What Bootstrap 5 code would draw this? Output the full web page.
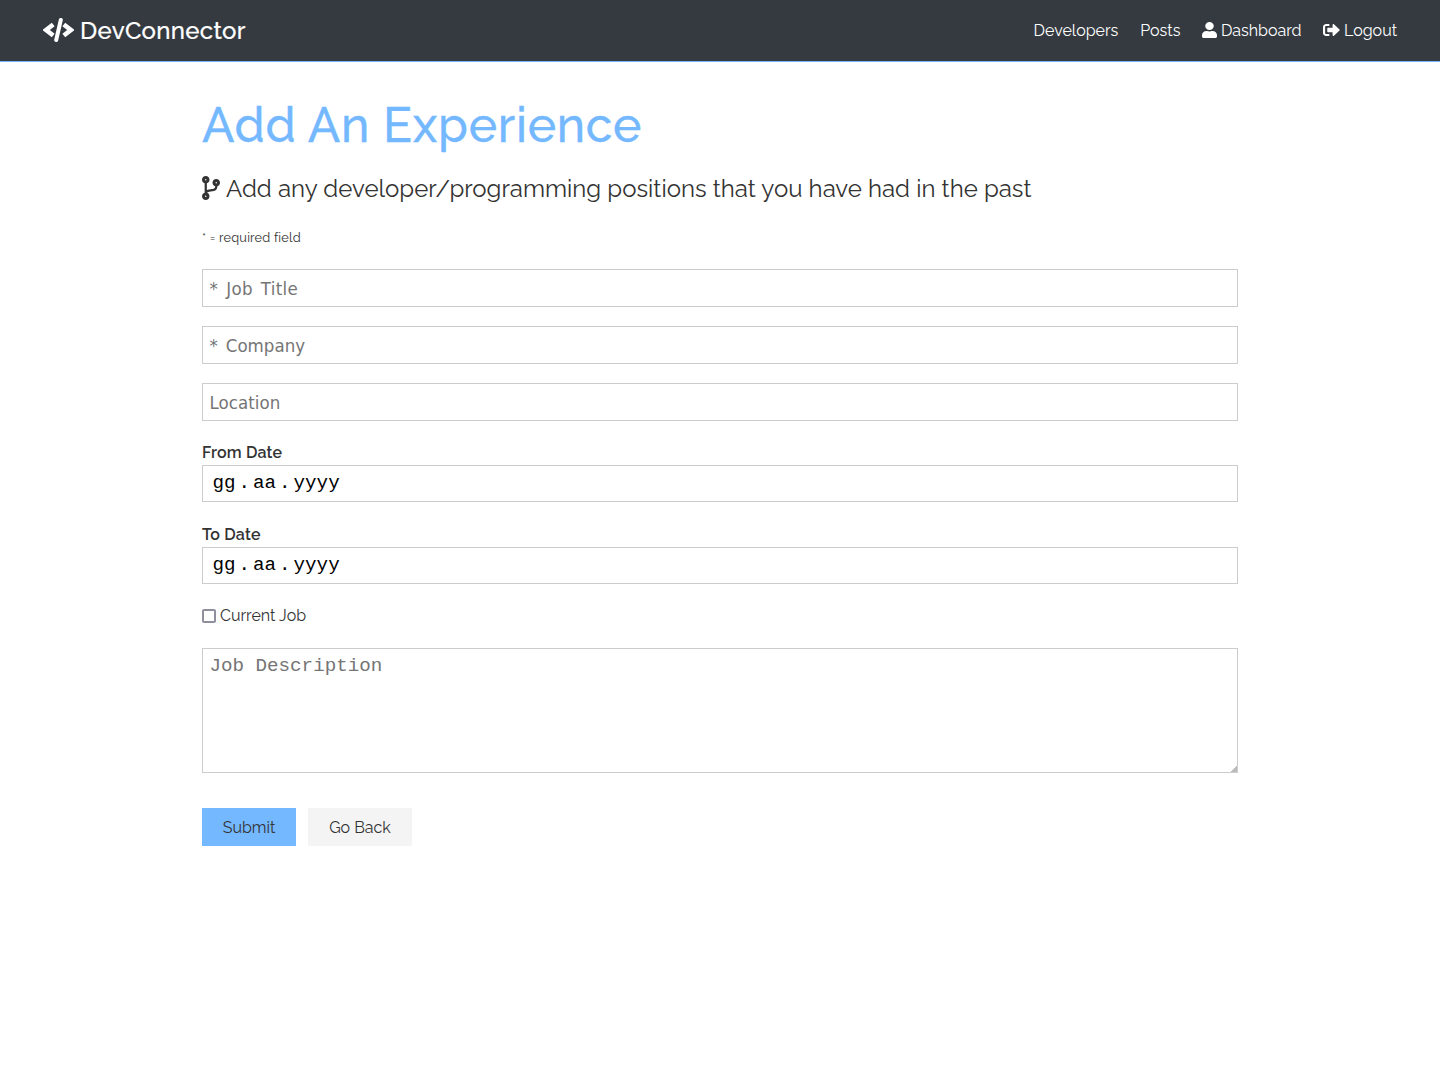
<!DOCTYPE html>
<html lang="en">
<head>
<meta charset="utf-8">
<meta name="viewport" content="width=device-width, initial-scale=1">
<title>DevConnector</title>
<link href="https://cdn.jsdelivr.net/npm/bootstrap@5.3.0/dist/css/bootstrap.min.css" rel="stylesheet">
<style>
body{font-family:Raleway,Lato,sans-serif;font-size:16px;line-height:1.6;color:#333;background:#fff}
.topbar{height:62px;background:#343a40;border-bottom:1px solid #74b8ff;padding:0 43px}
.topbar a{color:#fff;text-decoration:none;white-space:nowrap}
.brand{font-size:24px;font-weight:500;letter-spacing:.32px;gap:6px}
.brand svg{width:31px;height:24px}
.brand span{padding-top:1px;-webkit-text-stroke:.2px #fff}
.menu{gap:22px}
.menu a{gap:4px}
.menu .m3{gap:3.500px}
.menu .m4{margin-left:-.5px}
.menu svg{margin-bottom:2px}
.page{width:1100px;padding:32px 32px 0}
.title{font-size:48px;line-height:58px;font-weight:500;letter-spacing:.73px;color:#74b8ff;-webkit-text-stroke:.3px #74b8ff;margin:2px 0 16px;white-space:nowrap}
.intro{font-size:24px;line-height:38px;letter-spacing:.02px;gap:6px;margin-bottom:20px;white-space:nowrap}
.intro svg{margin-bottom:2px}
.hint{font-size:12.8px;line-height:20px;letter-spacing:.2px;margin-bottom:21px}
.page .form-control{border:1px solid #ccc;border-radius:0;font-size:19.2px;padding:6px 6.500px;color:#000;background:#fff;box-shadow:none}
.page input.form-control{font-family:Tahoma,"DejaVu Sans Condensed","DejaVu Sans",sans-serif;font-stretch:condensed;font-size:18.500px;word-spacing:2.500px;letter-spacing:.05px;height:38px;margin-bottom:19px}
.page input.job-title{letter-spacing:.3px}
.page .form-control::placeholder{color:#757575;opacity:1}
.page textarea.form-control{font-family:"Courier New","Liberation Mono",monospace;height:125px;line-height:22px;margin-bottom:35px}
textarea::-webkit-resizer{background:linear-gradient(135deg,transparent 78%,#bbb 78%)}
.page .datebox{font-family:"Courier New","Liberation Mono",monospace;height:37px;line-height:23px;margin-bottom:20px}
.datebox span{padding:0 3px}
.flabel{font-weight:600;line-height:25px;letter-spacing:.18px}
.check{gap:4px;line-height:26px;margin-bottom:19px;margin-top:-1px}
.check input{appearance:none;width:14px;height:14px;border:2px solid #8f8f9d;border-radius:2px;margin:0;background:#fff}
.page .btn{border:0;border-radius:0;padding:1px 0 0;height:38px;line-height:38px;color:#333;font-size:16px}
.actions{gap:12px}
.btn-send,.btn-send:hover{width:94px;background:#74b8ff}
.btn-back,.btn-back:hover{width:104px;background:#f4f4f4}
svg{flex:none;fill:currentColor}
</style>
</head>
<body>
<nav class="topbar d-flex align-items-center justify-content-between">
  <a class="brand d-flex align-items-center" href="#"><svg viewBox="0 0 31 24"><path d="M10.200 6.500 3.200 12l7 5.500M20.800 6.500l7 5.500-7 5.500" fill="none" stroke="currentColor" stroke-width="4.600"/><path d="M17.800 2 13.200 22" stroke="currentColor" stroke-width="4" stroke-linecap="round"/></svg><span>DevConnector</span></a>
  <div class="menu d-flex align-items-center">
    <a href="#">Developers</a>
    <a href="#">Posts</a>
    <a class="m3 d-flex align-items-center" href="#"><svg width="15" height="16" viewBox="0 0 448 512" preserveAspectRatio="none"><path d="M224 256c70.7 0 128-57.3 128-128S294.700 0 224 0 96 57.300 96 128s57.300 128 128 128zm89.600 32h-16.700c-22.200 10.200-46.900 16-72.900 16s-50.600-5.800-72.900-16h-16.700C60.200 288 0 348.200 0 422.400V464c0 26.500 21.500 48 48 48h352c26.500 0 48-21.500 48-48v-41.600c0-74.200-60.200-134.400-134.400-134.400z"/></svg><span>Dashboard</span></a>
    <a class="m4 d-flex align-items-center" href="#"><svg width="17" height="16" viewBox="0 0 512 512" preserveAspectRatio="none"><path d="M497 273L329 441c-15 15-41 4.500-41-17v-96H152c-13.300 0-24-10.700-24-24v-96c0-13.300 10.700-24 24-24h136V88c0-21.400 25.900-32 41-17l168 168c9.300 9.400 9.300 24.600 0 34zM192 436v-40c0-6.600-5.400-12-12-12H96c-17.700 0-32-14.300-32-32V160c0-17.700 14.300-32 32-32h84c6.600 0 12-5.400 12-12V76c0-6.600-5.400-12-12-12H96c-53 0-96 43-96 96v192c0 53 43 96 96 96h84c6.600 0 12-5.400 12-12z"/></svg><span>Logout</span></a>
  </div>
</nav>
<main class="page mx-auto">
  <h1 class="title">Add An Experience</h1>
  <p class="intro d-flex align-items-center"><svg width="18" height="24" viewBox="0 0 384 512"><path d="M384 144c0-44.200-35.800-80-80-80s-80 35.800-80 80c0 36.400 24.300 67.100 57.500 76.800-.6 16.100-4.200 28.500-11 36.900-15.400 19.200-49.300 22.400-85.200 25.700-28.200 2.600-57.400 5.400-81.300 16.900v-144c32.500-10.200 56-40.500 56-76.300 0-44.200-35.800-80-80-80S0 35.800 0 80c0 35.800 23.500 66.100 56 76.300v199.300C23.500 365.900 0 396.200 0 432c0 44.200 35.800 80 80 80s80-35.800 80-80c0-34-21.200-63.100-51.200-74.600 3.100-5.200 7.800-9.800 14.900-13.400 16.200-8.200 40.400-10.400 66.100-12.800 42.200-3.900 90-8.400 118.200-43.400 14-17.400 21.100-39.800 21.600-67.900 31.600-10.800 54.400-40.700 54.400-75.900zM80 64c8.800 0 16 7.200 16 16s-7.200 16-16 16-16-7.200-16-16 7.200-16 16-16zm0 384c-8.800 0-16-7.200-16-16s7.200-16 16-16 16 7.200 16 16-7.200 16-16 16zm224-320c8.800 0 16 7.200 16 16s-7.200 16-16 16-16-7.200-16-16 7.200-16 16-16z"/></svg><span>Add any developer/programming positions that you have had in the past</span></p>
  <div class="hint">* = required field</div>
  <form>
    <input class="form-control job-title" type="text" placeholder="* Job Title">
    <input class="form-control" type="text" placeholder="* Company">
    <input class="form-control" type="text" placeholder="Location">
    <div class="flabel"><span>From Date</span></div>
    <div class="form-control datebox"><span>gg</span>.<span>aa</span>.<span>yyyy</span></div>
    <div class="flabel"><span>To Date</span></div>
    <div class="form-control datebox"><span>gg</span>.<span>aa</span>.<span>yyyy</span></div>
    <label class="check d-flex align-items-center"><input type="checkbox"><span>Current Job</span></label>
    <textarea class="form-control" placeholder="Job Description"></textarea>
    <div class="d-flex actions"><button class="btn btn-send" type="button">Submit</button><a class="btn btn-back" href="#">Go Back</a></div>
  </form>
</main>
<script src="https://cdn.jsdelivr.net/npm/bootstrap@5.3.0/dist/js/bootstrap.bundle.min.js"></script>
</body>
</html>
